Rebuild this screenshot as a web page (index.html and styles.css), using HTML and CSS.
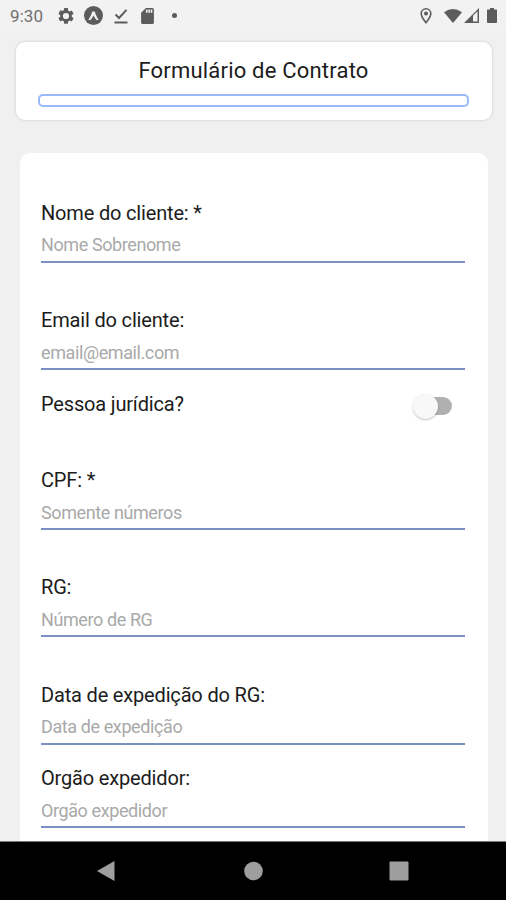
FILE: index.html
```html
<!DOCTYPE html>
<html lang="pt-BR">
<head>
    <meta charset="UTF-8">
    <meta name="viewport" content="width=device-width, initial-scale=1.0">
    <title>Formulário de Contrato</title>
    <link rel="stylesheet" href="styles.css">
</head>
<body>
<div class="status-bar">
    <span class="clock">9:30</span>
    <svg class="icon-settings" viewBox="2 2 20 20"><path d="M19.14 12.94c.04-.3.06-.61.06-.94s-.02-.64-.07-.94l2.03-1.58a.5.5 0 0 0 .12-.61l-1.92-3.32a.5.5 0 0 0-.59-.22l-2.39.96a7 7 0 0 0-1.62-.94l-.36-2.54A.48.48 0 0 0 13.92 2h-3.84a.48.48 0 0 0-.47.41l-.36 2.54a7.4 7.4 0 0 0-1.62.94l-2.39-.96a.5.5 0 0 0-.59.22L2.74 8.87a.48.48 0 0 0 .12.61l2.03 1.58a6 6 0 0 0 0 1.88l-2.03 1.58a.5.5 0 0 0-.12.61l1.92 3.32c.12.22.37.29.59.22l2.39-.96c.5.38 1.03.7 1.62.94l.36 2.54c.05.24.24.41.48.41h3.84c.24 0 .44-.17.47-.41l.36-2.54a7 7 0 0 0 1.62-.94l2.39.96c.22.08.47 0 .59-.22l1.92-3.32a.5.5 0 0 0-.12-.61zM12 15.9a3.9 3.9 0 1 1 0-7.8 3.9 3.9 0 0 1 0 7.8z"/></svg>
    <svg class="icon-expo" viewBox="0 0 20 20"><circle cx="10" cy="10" r="10"/><path class="mark" d="M4.500 14.200C6.500 12 7.600 9.200 8.400 6.500Q10 4.500 11.600 6.500C12.400 9.200 13.500 12 15.500 14.200L13.600 15C12 13.500 11 11.800 10 10C9 11.800 8 13.500 6.400 15z"/></svg>
    <svg class="icon-done" viewBox="0 0 14 16"><path d="M1.500 6.500l3.500 3.500L12.500 1.800M0.500 14.600h13"/></svg>
    <svg class="icon-sd" viewBox="4 2 16 20"><path d="M18 2h-8L4.020 8 4 20c0 1.100.9 2 2 2h12c1.100 0 2-.9 2-2V4c0-1.100-.9-2-2-2zm-6 6h-2V4h2v4zm3 0h-2V4h2v4zm3 0h-2V4h2v4z"/></svg>
    <span class="dot"></span>
    <svg class="icon-place" viewBox="5 2 14 20"><path d="M12 2a7 7 0 0 0-7 7c0 5.250 7 13 7 13s7-7.750 7-13a7 7 0 0 0-7-7zM7 9a5 5 0 0 1 10 0c0 2.880-2.880 7.190-5 9.880C9.920 16.210 7 11.850 7 9z"/><circle cx="12" cy="9" r="2.500"/></svg>
    <svg class="icon-wifi" viewBox="0 0 18 14"><path d="M0 3.200Q9-3.200 18 3.200L9 14z"/></svg>
    <svg class="icon-signal" viewBox="0 0 15 15"><path d="M0 15L15 0V15zM9 7.700V13.500H13.500V3.300z" fill-rule="evenodd"/></svg>
    <svg class="icon-battery" viewBox="0 0 10 15"><path d="M3 0h4v1.500h2.200q.8 0 .8.800v11.900q0 .8-.8.800H.8q-.8 0-.8-.8V2.300q0-.8.8-.8H3z"/></svg>
</div>

<header class="header-card">
    <h1>Formulário de Contrato</h1>
    <div class="progress"></div>
</header>

<form class="form-card">
    <div class="field">
        <label for="nome">Nome do cliente: *</label>
        <input type="text" id="nome" placeholder="Nome Sobrenome">
    </div>
    <div class="field">
        <label for="email">Email do cliente:</label>
        <input type="text" id="email" placeholder="email@email.com">
    </div>
    <div class="switch-row">
        <label for="juridica">Pessoa jurídica?</label>
        <button type="button" id="juridica" class="switch"><span class="thumb"></span></button>
    </div>
    <div class="field">
        <label for="cpf">CPF: *</label>
        <input type="text" id="cpf" placeholder="Somente números">
    </div>
    <div class="field">
        <label for="rg">RG:</label>
        <input type="text" id="rg" placeholder="Número de RG">
    </div>
    <div class="field">
        <label for="data">Data de expedição do RG:</label>
        <input type="text" id="data" placeholder="Data de expedição">
    </div>
    <div class="field compact">
        <label for="orgao">Orgão expedidor:</label>
        <input type="text" id="orgao" placeholder="Orgão expedidor">
    </div>
</form>

<nav class="nav-bar">
    <svg viewBox="0 0 20 22"><path d="M1 11L18.500 1V21z"/></svg>
    <svg viewBox="0 0 20 22"><circle cx="10.500" cy="11" r="9.300"/></svg>
    <svg viewBox="0 0 20 22"><rect x="0.500" y="1.500" width="19" height="19" rx="1"/></svg>
</nav>
</body>
</html>
```
FILE: styles.css
```css
* {
    box-sizing: border-box;
}
body {
    margin: 0;
    height: 900px;
    overflow: hidden;
    display: flex;
    flex-direction: column;
    background-color: #f0f0f0;
    font-family: Roboto, sans-serif;
    color: #1c1c1c;
}
svg {
    display: block;
    flex: none;
}
.status-bar {
    height: 31px;
    flex: none;
    display: flex;
    align-items: center;
    padding: 0 9px 0 10px;
    background-color: #f2f2f2;
    color: #5c5c5c;
    fill: #5c5c5c;
}
.clock {
    width: 48px;
    font-size: 17px;
    letter-spacing: 0.1px;
    color: #707070;
}
.icon-settings {
    width: 16px;
    height: 16px;
}
.icon-expo {
    width: 19px;
    height: 19px;
    margin-left: 10px;
}
.icon-expo .mark {
    fill: #f2f2f2;
}
.icon-done {
    width: 14px;
    height: 16px;
    margin-left: 11px;
    fill: none;
    stroke: #5c5c5c;
    stroke-width: 2;
}
.icon-sd {
    width: 13px;
    height: 16px;
    margin-left: 13px;
}
.dot {
    width: 5px;
    height: 5px;
    margin-left: 18px;
    border-radius: 50%;
    background-color: #5c5c5c;
}
.icon-place {
    width: 12px;
    height: 16px;
    margin-left: auto;
}
.icon-wifi {
    width: 18px;
    height: 14px;
    margin-left: 12px;
}
.icon-signal {
    width: 15px;
    height: 15px;
    margin-left: 2px;
}
.icon-battery {
    width: 10px;
    height: 15px;
    margin-left: 8px;
}
.header-card {
    height: 78px;
    flex: none;
    margin: 11px 14px 0 16px;
    padding: 16px 23px 0 22px;
    border-radius: 9px;
    background-color: #fff;
    box-shadow: 0 0 3px rgba(0, 0, 0, 0.18);
}
h1 {
    margin: 0 0 10px;
    font-size: 22px;
    line-height: 26px;
    letter-spacing: 0.2px;
    font-weight: 400;
    text-align: center;
}
.progress {
    height: 13px;
    border: 2px solid #98bafa;
    border-radius: 5px;
}
.form-card {
    flex: 1;
    min-height: 0;
    overflow: hidden;
    margin: 33px 18px 0 20px;
    padding: 2.700px 23px 0 21px;
    border-radius: 10px 10px 0 0;
    background-color: #fff;
}
label {
    font-size: 20px;
    line-height: 24px;
    letter-spacing: -0.170px;
}
.field {
    display: flex;
    flex-direction: column;
    margin-top: 45.300px;
}
.switch-row + .field {
    margin-top: 51.800px;
}
.field.compact {
    margin-top: 21.500px;
}
input {
    width: 100%;
    height: 38px;
    padding: 4px 0 0;
    border: none;
    border-bottom: 2px solid #7b91c4;
    background: none;
    font-family: inherit;
    font-size: 18px;
    letter-spacing: -0.400px;
    outline: none;
}
input::placeholder {
    color: #a9a9a9;
    opacity: 1;
}
.switch-row {
    display: flex;
    justify-content: space-between;
    align-items: center;
    height: 24px;
    margin-top: 22px;
    padding-right: 13px;
}
.switch {
    display: flex;
    align-items: center;
    width: 38px;
    height: 18px;
    margin-top: 4px;
    padding: 0;
    border: none;
    border-radius: 9px;
    background-color: #b0b0b0;
}
.thumb {
    flex: none;
    width: 25px;
    height: 25px;
    margin-left: -1px;
    border-radius: 50%;
    background-color: #f8f8f8;
    box-shadow: 0 1px 2px rgba(0, 0, 0, 0.25);
}
.nav-bar {
    height: 59px;
    flex: none;
    display: flex;
    justify-content: space-between;
    padding: 18px 97px 0 96px;
    border-top: 1px solid #777;
    background-color: #000;
    fill: #9e9e9e;
}
.nav-bar svg {
    width: 20px;
    height: 22px;
}
```
